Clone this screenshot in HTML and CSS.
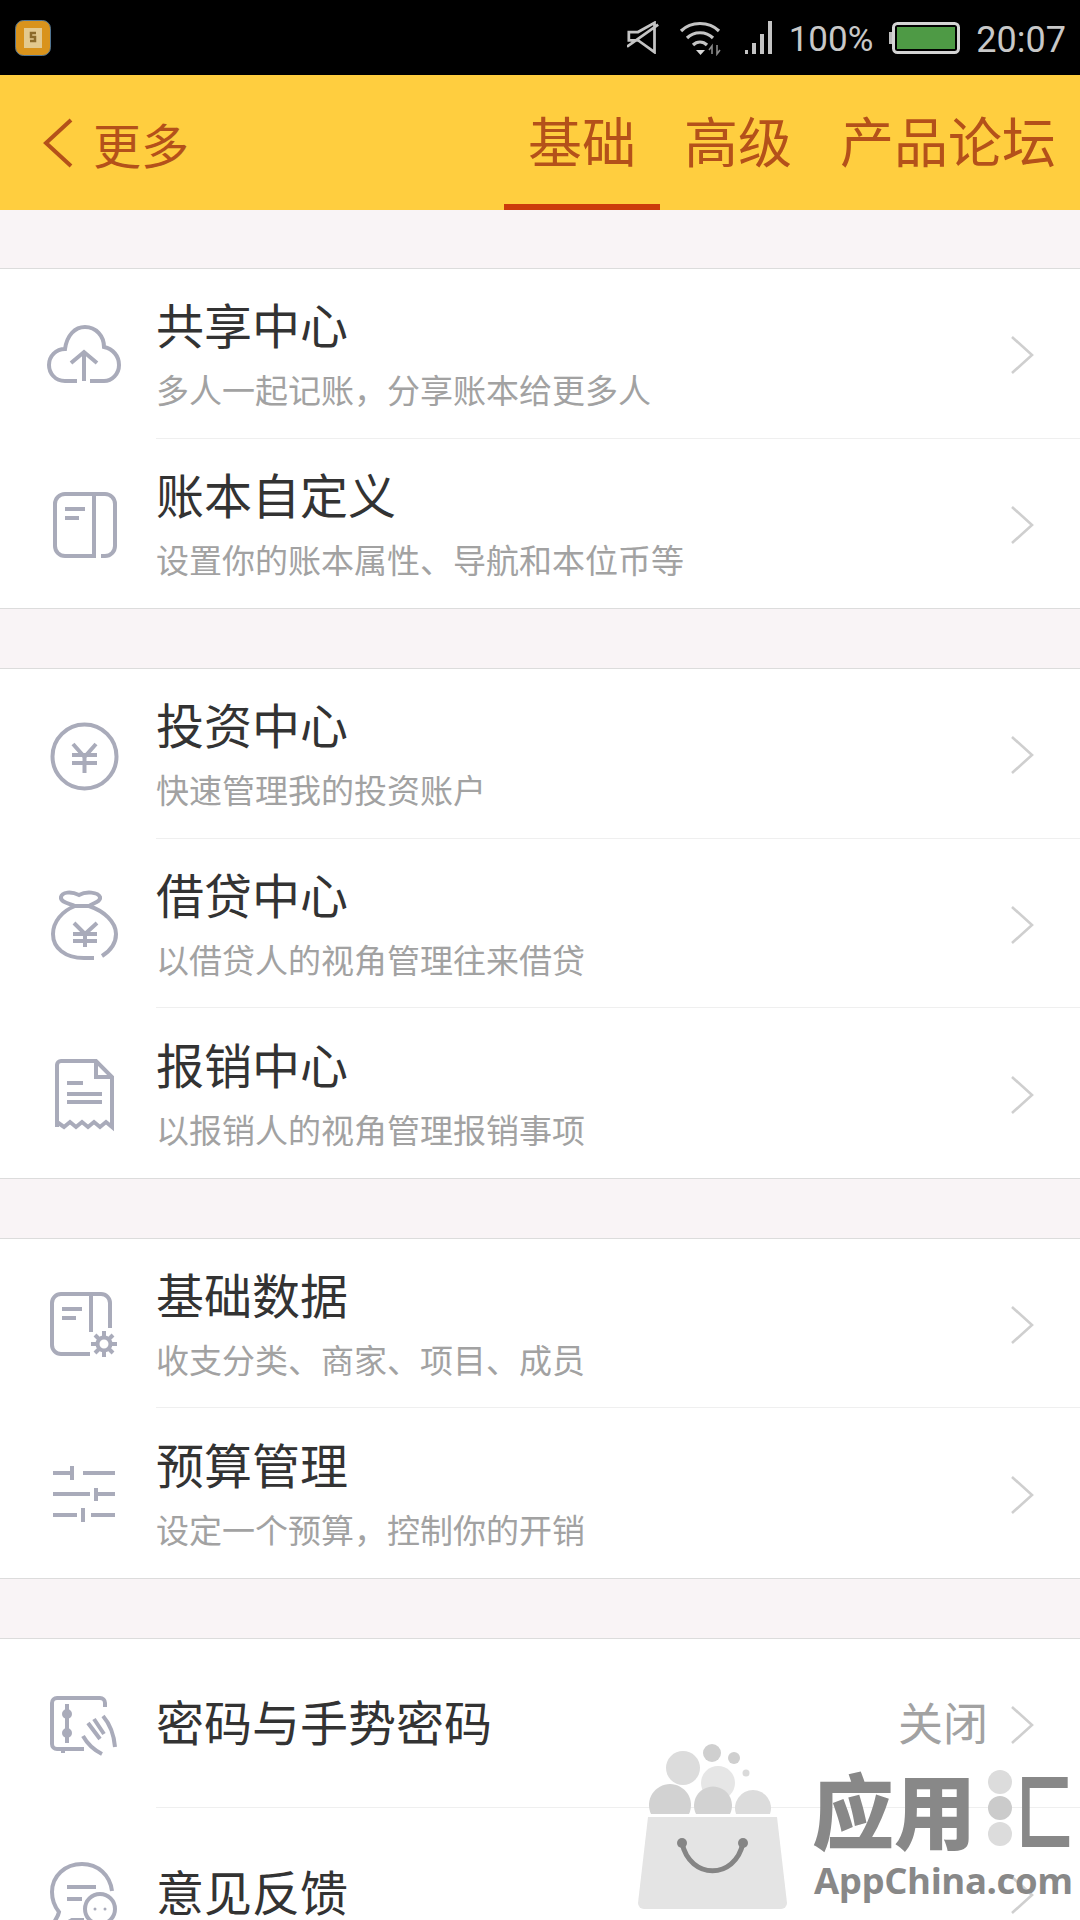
FILE: index.html
```html
<!DOCTYPE html>
<html lang="zh-CN">
<head>
<meta charset="utf-8">
<title>更多</title>
<link rel="stylesheet" href="styles.css">
</head>
<body>
<div class="screen">
  <div class="status">
    <svg class="appicon" viewBox="0 0 36 36" width="36" height="36"><rect x="0.5" y="0.5" width="35" height="35" rx="8" fill="#D9931C" stroke="#4F7391"/><rect x="9" y="8" width="18" height="20" fill="#E3C98F"/><path d="M21 13h-5v4h4v4h-5" fill="none" stroke="#8C6A2A" stroke-width="2.5"/></svg>
    <div class="status-right">
      <svg class="sicon mute" viewBox="0 0 36 36" width="33" height="33"><path d="M2 12H12L30 2V34L12 21H2ZM0 28L34 4" fill="none" stroke="#c4c4c4" stroke-width="3"/></svg>
      <svg class="sicon wifi" viewBox="0 0 44 36" width="44" height="36"><path d="M2 11C12 1 30 1 40 11M8 18C15 11 27 11 34 18M14 25C18 21 24 21 28 25" fill="none" stroke="#c4c4c4" stroke-width="3.2"/><path d="M17 30H26L21.500 35Z" fill="#d8d8d8"/><path d="M33 34V26L30 30M38 25V34L41 30" fill="none" stroke="#8a8a8a" stroke-width="1.6"/></svg>
      <svg class="sicon signal" viewBox="0 0 30 36" width="30" height="36"><path d="M2 30h3v4H2ZM9 23h4v11H9ZM17 14h4v20h-4ZM25 1h4v33h-4Z" fill="#c4c4c4"/></svg>
      <span class="stext pct">100%</span>
      <svg class="sicon batt" viewBox="0 0 72 32" width="72" height="32"><rect x="0" y="10" width="4" height="12" fill="#bdbdbd"/><rect x="4.500" y="1.500" width="65" height="29" rx="4" fill="none" stroke="#d4d4d4" stroke-width="3"/><rect x="8" y="5" width="58" height="22" fill="#4E9A45"/></svg>
      <span class="stext time">20:07</span>
    </div>
  </div>

  <header class="nav">
    <div class="back">
      <svg class="back-arrow" viewBox="0 0 32 50" width="32" height="50"><path d="M29 2L4 25L29 48" fill="none" stroke="#B4511A" stroke-width="4"/></svg>
      <span>更多</span>
    </div>
    <nav class="tabs">
      <span class="tab active">基础</span>
      <span class="tab">高级</span>
      <span class="tab">产品论坛</span>
    </nav>
  </header>

  <section class="group">
    <div class="row">
      <svg class="icon" viewBox="0 0 80 80"><path d="M33 65H21C11 65 5 57 5 49C5 40 12 33 21 33C23 19 31 11 41 11C52 11 60 20 60 31C69 33 75 40 75 49C75 58 68 65 60 65H46M40 65V37M27 47L40 36L53 47"/></svg>
      <div class="body">
        <div class="texts"><div class="title">共享中心</div><div class="sub">多人一起记账，分享账本给更多人</div></div>
        <svg class="chev" viewBox="0 0 24 40"><path d="M2 2L22 20L2 38"/></svg>
      </div>
    </div>
    <div class="row">
      <svg class="icon" viewBox="0 0 80 80"><path d="M50 9V71H21A10 10 0 0 1 11 61V19A10 10 0 0 1 21 9H61A10 10 0 0 1 71 19V61A10 10 0 0 1 61 71H57M21 24H41M21 33H35"/></svg>
      <div class="body last">
        <div class="texts"><div class="title">账本自定义</div><div class="sub">设置你的账本属性、导航和本位币等</div></div>
        <svg class="chev" viewBox="0 0 24 40"><path d="M2 2L22 20L2 38"/></svg>
      </div>
    </div>
  </section>

  <section class="group">
    <div class="row">
      <svg class="icon" viewBox="0 0 80 80"><circle cx="40.500" cy="40.500" r="32"/><path d="M29 28L40.500 41L52 28M28 39H53M28 47H53M40.500 41V57"/></svg>
      <div class="body">
        <div class="texts"><div class="title">投资中心</div><div class="sub">快速管理我的投资账户</div></div>
        <svg class="chev" viewBox="0 0 24 40"><path d="M2 2L22 20L2 38"/></svg>
      </div>
    </div>
    <div class="row">
      <svg class="icon" viewBox="0 0 80 80"><path d="M31 21C24 18 16 17 17 12C18 7 27 6 35 10C42 6 54 7 56 12C57 17 49 18 45 21H31C18 26 9 37 9 49C9 63 21 73 40 73H50M58 71C66 66 72 58 72 49C72 37 60 26 45 21M30 38L41 49L53 38M29 49H53M29 56H53M41 49V62"/></svg>
      <div class="body">
        <div class="texts"><div class="title">借贷中心</div><div class="sub">以借贷人的视角管理往来借贷</div></div>
        <svg class="chev" viewBox="0 0 24 40"><path d="M2 2L22 20L2 38"/></svg>
      </div>
    </div>
    <div class="row">
      <svg class="icon" viewBox="0 0 80 80"><path d="M13 72V10A4 4 0 0 1 17 6H52L68 22V72L62 67L56 72L50 67L44 72L38 67L32 72L26 67L20 72L13 67M52 6V22H68M23 28H39M23 39H58M23 47H58"/></svg>
      <div class="body last">
        <div class="texts"><div class="title">报销中心</div><div class="sub">以报销人的视角管理报销事项</div></div>
        <svg class="chev" viewBox="0 0 24 40"><path d="M2 2L22 20L2 38"/></svg>
      </div>
    </div>
  </section>

  <section class="group">
    <div class="row">
      <svg class="icon" viewBox="0 0 80 80"><path d="M46 69H17A9 9 0 0 1 8 60V18A9 9 0 0 1 17 9H57A9 9 0 0 1 66 18V43M47 9V47M18 24H38M18 33H32"/><circle cx="60" cy="59" r="6.500"/><path d="M60 46V52M60 66V72M47 59H53M67 59H73M51 50L55 54M65 64L69 68M69 50L65 54M55 64L51 68"/></svg>
      <div class="body">
        <div class="texts"><div class="title">基础数据</div><div class="sub">收支分类、商家、项目、成员</div></div>
        <svg class="chev" viewBox="0 0 24 40"><path d="M2 2L22 20L2 38"/></svg>
      </div>
    </div>
    <div class="row">
      <svg class="icon" viewBox="0 0 80 80"><path d="M9 18H28M28 11V25M39 18H71M9 39H46M52 33V46M52 39H71M9 60H33M39 53V67M47 60H71"/></svg>
      <div class="body last">
        <div class="texts"><div class="title">预算管理</div><div class="sub">设定一个预算，控制你的开销</div></div>
        <svg class="chev" viewBox="0 0 24 40"><path d="M2 2L22 20L2 38"/></svg>
      </div>
    </div>
  </section>

  <section class="group open">
    <div class="row">
      <svg class="icon" viewBox="0 0 80 80"><path d="M61 22V18A5 5 0 0 0 56 13H13A5 5 0 0 0 8 18V59A5 5 0 0 0 13 64H40M19 64V68M23 19V58M44 38L56 54M50 34L60 49M59 31C65 38 70 50 71 62M39 51C44 60 50 65 58 69"/><circle cx="23" cy="29" r="3"/><circle cx="23" cy="48" r="3"/></svg>
      <div class="body">
        <div class="texts"><div class="title solo">密码与手势密码</div></div>
        <span class="value">关闭</span>
        <svg class="chev" viewBox="0 0 24 40"><path d="M2 2L22 20L2 38"/></svg>
      </div>
    </div>
    <div class="row">
      <svg class="icon" viewBox="0 0 80 80"><path d="M68 36C66 20 54 9 38 9C21 9 8 21 8 37C8 45 11 52 15 57C14 62 11 66 8 70C16 70 23 68 28 65H40M23 32H52M23 44H38"/><circle cx="56" cy="54" r="15"/><circle class="dot" cx="51" cy="54" r="1.500"/><circle class="dot" cx="61" cy="54" r="1.500"/></svg>
      <div class="body">
        <div class="texts"><div class="title solo">意见反馈</div></div>
        <svg class="chev" viewBox="0 0 24 40"><path d="M2 2L22 20L2 38"/></svg>
      </div>
    </div>
  </section>

  <div class="watermark">
    <svg class="wm-bag" viewBox="0 0 152 170" width="152" height="170">
      <circle cx="47" cy="24" r="17" fill="#dcdcdc"/>
      <circle cx="76" cy="9" r="9" fill="#cfcfcf"/>
      <circle cx="98" cy="14" r="6" fill="#cfcfcf"/>
      <circle cx="110" cy="29" r="3.500" fill="#dadada"/>
      <circle cx="82" cy="39" r="17" fill="#e6e6e6"/>
      <path d="M15 70A21 21 0 1 1 53 70Z" fill="#d2d2d2"/>
      <path d="M60 70A19 19 0 1 1 94 70Z" fill="#d2d2d2"/>
      <path d="M100 70A18 18 0 1 1 134 70Z" fill="#dcdcdc"/>
      <path d="M12 73H141L151 159A6 6 0 0 1 145 165H8A6 6 0 0 1 2 159Z" fill="#e4e4e4"/>
      <path d="M46 99C54 136 99 136 107 99" fill="none" stroke="#858585" stroke-width="5"/>
      <circle cx="46" cy="99" r="5" fill="#858585"/>
      <circle cx="107" cy="99" r="5" fill="#858585"/>
    </svg>
    <div class="wm-text">
      <div class="wm-cn">
        <span>应用</span>
        <span class="wm-dots"><i></i><i class="mid"></i><i></i></span>
        <span class="wm-last">匚</span>
      </div>
      <div class="wm-en">AppChina.com</div>
    </div>
  </div>
</div>
</body>
</html>
```

FILE: styles.css
```css
* { box-sizing: border-box; }
html, body { margin: 0; padding: 0; }
body { font-family: "Noto Sans CJK SC", "Noto Sans", sans-serif; background: #F9F4F6; }
.screen { position: relative; width: 1080px; height: 1920px; overflow: hidden; background: #F9F4F6; }

.status { height: 75px; background: #000; display: flex; align-items: center; justify-content: space-between; padding: 0 14px 0 15px; }
.status-right { display: flex; align-items: center; }
.sicon { display: block; flex: none; }
.mute { margin-right: 19px; }
.wifi { margin-right: 20px; }
.signal { margin-right: 16px; }
.batt { margin: 0 15px 0 16px; }
.stext { font-family: Roboto, sans-serif; font-size: 35px; color: #c8c8c8; line-height: 40px; padding-top: 4px; }
.time { font-size: 36px; }

.nav { height: 135px; background: #FFCE3F; display: flex; align-items: stretch; justify-content: space-between; color: #B4511A; }
.back { display: flex; align-items: center; padding-left: 42px; font-size: 48px; gap: 19px; }
.back-arrow { display: block; }
.tabs { display: flex; align-items: stretch; }
.tab { font-size: 54px; padding: 0 24px; display: flex; align-items: center; border-bottom: 6px solid transparent; }
.tab.active { border-bottom-color: #CC3B0B; }

.group { margin-top: 59px; background: #fff; border-top: 1px solid #dcdcdc; border-bottom: 1px solid #dcdcdc; }
.nav + .group { margin-top: 58px; }
.group.open { border-bottom: 0; }
.row { display: flex; align-items: center; height: 169.5px; padding-left: 44px; }
.icon { width: 80px; height: 80px; flex: none; margin: 4px 32px 0 0; fill: none; stroke: #A9ABBA; stroke-width: 4; }
.icon .dot { fill: #A9ABBA; stroke: none; }
.body { flex: 1; height: 100%; display: flex; align-items: center; border-bottom: 1px solid #efefef; padding: 4px 46px 0 0; }
.body.last, .open .row:last-child .body { border-bottom: 0; }
.texts { flex: 1; padding-bottom: 6px; }
.title { font-size: 48px; line-height: 62px; color: #333; }
.title.solo { line-height: 50px; margin-bottom: -4px; padding-bottom: 8px; }
.sub { font-size: 33px; line-height: 46px; color: #a2a2a2; margin-top: 12px; }
.value { font-size: 45px; line-height: 50px; color: #a2a2a2; margin-right: 22px; margin-top: -6px; }
.chev { width: 24px; height: 40px; flex: none; fill: none; stroke: #cfcfcf; stroke-width: 2.6; }

.watermark { position: absolute; left: 636px; top: 1744px; width: 444px; display: flex; gap: 24px; pointer-events: none; }
.wm-bag { flex: none; }
.wm-text { padding-top: 16px; color: #888; }
.wm-cn { display: flex; align-items: center; font-size: 82px; font-weight: 900; line-height: 96px; height: 96px; }
.wm-dots { display: flex; flex-direction: column; gap: 2px; margin: 0 5px 0 12px; }
.wm-dots i { display: block; width: 24px; height: 24px; border-radius: 50%; background: #dcdcdc; }
.wm-dots i.mid { background: #cbcbcb; }
.wm-last { display: inline-block; width: 50px; transform: scaleX(0.68); transform-origin: left center; }
.wm-en { font-family: "Open Sans", sans-serif; font-weight: 700; font-size: 36.5px; line-height: 44px; margin: 2px 0 0 2px; letter-spacing: -0.4px; white-space: nowrap; }
```
